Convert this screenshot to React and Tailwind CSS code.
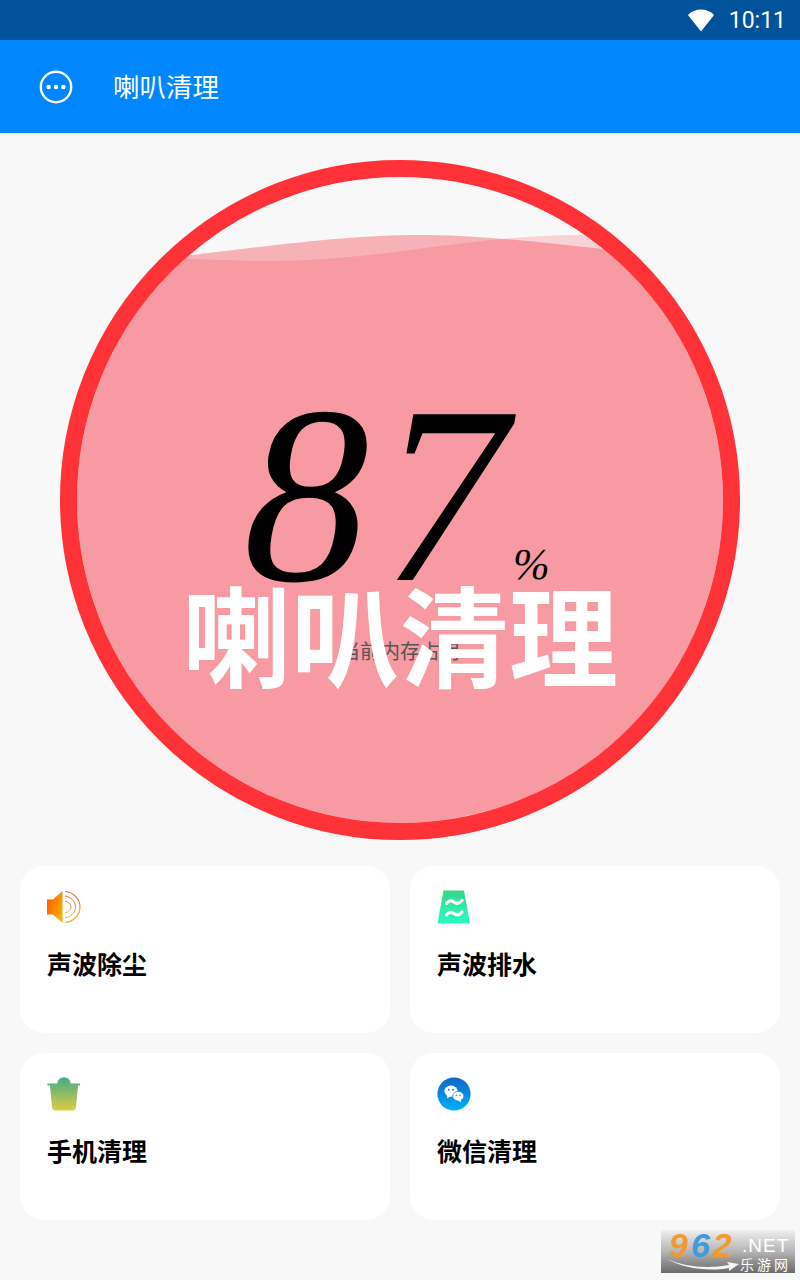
const cjk = "font-['Noto_Sans_CJK_SC',sans-serif]"

function WifiIcon() {
  return (
    <svg width="28" height="23" viewBox="0 0 30 24" preserveAspectRatio="none" className="block">
      <path d="M15 23.5 L1 6.2 C4.8 2.6 9.6 0.6 15 0.6 C20.4 0.6 25.2 2.6 29 6.2 Z" fill="#fff" />
    </svg>
  )
}

function MoreIcon() {
  return (
    <svg width="34" height="34" viewBox="0 0 34 34" className="block">
      <circle cx="17" cy="17" r="15.2" fill="none" stroke="#fff" strokeWidth="2.4" />
      <circle cx="9.6" cy="17" r="2.2" fill="#fff" />
      <circle cx="17" cy="17" r="2.2" fill="#fff" />
      <circle cx="24.4" cy="17" r="2.2" fill="#fff" />
    </svg>
  )
}

function SpeakerIcon() {
  return (
    <svg width="34" height="34" viewBox="0 0 34 34" className="block">
      <defs>
        <linearGradient id="spk" x1="0" y1="0.2" x2="1" y2="0.8">
          <stop offset="0" stopColor="#ff5a00" />
          <stop offset="1" stopColor="#ffb400" />
        </linearGradient>
        <linearGradient id="arc" x1="0" y1="0" x2="0" y2="1">
          <stop offset="0" stopColor="#ea6a3a" />
          <stop offset="1" stopColor="#f5b52e" />
        </linearGradient>
      </defs>
      <path d="M0 9.5 H6 L15.5 1 V33 L6 24.5 H0 Z" fill="url(#spk)" />
      <path d="M18 1.5 C26 2 33 8.5 33 17 C33 25.5 26 32 18 32.5" fill="none" stroke="url(#arc)" strokeWidth="1.1" />
      <path d="M18 6 C24 7 28.5 11.5 28.5 17 C28.5 22.5 24 27 18 28" fill="none" stroke="url(#arc)" strokeWidth="1" />
      <path d="M18 11 C21.5 12 24 14 24 17 C24 20 21.5 22 18 23" fill="none" stroke="url(#arc)" strokeWidth="1" />
    </svg>
  )
}

function DrainIcon() {
  return (
    <svg width="34" height="34" viewBox="0 0 34 34" className="block">
      <defs>
        <linearGradient id="drn" x1="0" y1="0" x2="0" y2="1">
          <stop offset="0" stopColor="#36d68a" />
          <stop offset="1" stopColor="#2afcc2" />
        </linearGradient>
      </defs>
      <path d="M6.5 0.5 H27 L33 33.5 H0.5 Z" fill="url(#drn)" />
      <path d="M9.5 13.5 C12 10 15 10.5 17 12 C19 13.5 22 14 25 10.5" fill="none" stroke="#fff" strokeWidth="3.2" strokeLinecap="round" />
      <path d="M9.5 25 C12 21.5 15 22 17 23.5 C19 25 22 25.5 25 22" fill="none" stroke="#fff" strokeWidth="3.2" strokeLinecap="round" />
    </svg>
  )
}

function TrashIcon() {
  return (
    <svg width="34" height="34" viewBox="0 0 34 34" className="block">
      <defs>
        <linearGradient id="trs" x1="0" y1="0" x2="0" y2="1">
          <stop offset="0" stopColor="#43ab84" />
          <stop offset="1" stopColor="#dccd42" />
        </linearGradient>
      </defs>
      <path
        d="M10.5 6.5 C10.5 2.5 13.5 0.5 17 0.5 C20.5 0.5 23.5 2.5 23.5 6.5 H33 V8.5 H31 L29 30 C28.8 32.5 27.5 33.5 25.5 33.5 H8.5 C6.5 33.5 5.2 32.5 5 30 L3 8.5 H0.5 V6.5 Z"
        fill="url(#trs)"
      />
    </svg>
  )
}

function WechatIcon() {
  return (
    <svg width="34" height="34" viewBox="0 0 34 34" className="block">
      <defs>
        <linearGradient id="wct" x1="0" y1="0" x2="0" y2="1">
          <stop offset="0" stopColor="#0f66c4" />
          <stop offset="1" stopColor="#00afff" />
        </linearGradient>
      </defs>
      <circle cx="17" cy="17" r="16.6" fill="url(#wct)" />
      <ellipse cx="14" cy="14.2" rx="6.6" ry="5.6" fill="#fff" />
      <path d="M10.5 18 L10 21.5 L14 19 Z" fill="#fff" />
      <ellipse cx="21.2" cy="19.2" rx="5.6" ry="4.8" fill="#fff" stroke="#1a8de8" strokeWidth="0.8" />
      <path d="M23.5 23 L24.5 25.5 L20.5 23.6 Z" fill="#fff" />
      <circle cx="11.8" cy="12.8" r="1" fill="#1a7fdc" />
      <circle cx="16" cy="12.8" r="1" fill="#1a7fdc" />
      <circle cx="19.4" cy="18.2" r="0.8" fill="#1a8de8" />
      <circle cx="23" cy="18.2" r="0.8" fill="#1a8de8" />
    </svg>
  )
}

function Gauge() {
  return (
    <div className="relative w-[680px] h-[680px] rounded-full border-[17px] border-[#ff3237] overflow-hidden">
      <svg className="absolute inset-0 w-full h-full" viewBox="77 177 646 646">
        <path
          d="M60 270 C230 252 330 235 417 235 C490 235 560 244 740 265 V840 H60 Z"
          fill="#f83744"
          fillOpacity="0.36"
        />
        <path
          d="M60 252 C150 257 220 261 270 261 C380 261 470 235 580 235 C640 235 690 245 740 255 V840 H60 Z"
          fill="#f83744"
          fillOpacity="0.19"
        />
      </svg>
      <div className="relative flex flex-col items-center pt-[188px]">
        <div className="flex items-end h-[260px] pr-[30px]">
          <span className="inline-block origin-bottom -skew-x-[10deg] font-['Liberation_Serif',serif] text-[253px] leading-[260px] tracking-[9px] text-black">
            87
          </span>
          <span className="inline-block origin-bottom -skew-x-[10deg] ml-[14px] font-['Liberation_Serif',serif] text-[44px] leading-none text-black mb-[38px]">
            %
          </span>
        </div>
        <p className={`${cjk} text-[20px] leading-[30px] text-[#555] mt-[11px]`}>当前内存占用</p>
      </div>
    </div>
  )
}

function FeatureCard({ icon, label }) {
  return (
    <div className="h-[167px] bg-white rounded-[24px] pl-[27px] pt-[24px]">
      {icon}
      <p className={`${cjk} mt-[21px] text-[25px] leading-[36px] font-bold text-black`}>{label}</p>
    </div>
  )
}

function SiteMark() {
  return (
    <div className="absolute right-[5px] bottom-[7px] w-[134px] h-[43px] bg-gradient-to-b from-[#efefef] via-[#b5b5b5] to-[#6a6a6a]">
      <span className="absolute left-[8px] top-[0px] font-['Liberation_Sans',sans-serif] italic font-bold text-[34px] leading-[30px] tracking-[3px]">
        <span className="text-[#f39a2e]">9</span>
        <span className="text-[#3f9bdc]">6</span>
        <span className="text-[#f39a2e]">2</span>
      </span>
      <span className="absolute left-[81px] top-[6px] font-['Liberation_Sans',sans-serif] text-[19px] leading-[20px] tracking-[1px] text-white">
        .NET
      </span>
      <span className={`absolute left-[79px] top-[25px] ${cjk} text-[14px] leading-[18px] tracking-[3px] text-white`}>
        乐游网
      </span>
      <svg className="absolute left-[6px] top-[28px]" width="72" height="14" viewBox="0 0 72 14">
        <path d="M0 1 C18 9 40 11 62 7 L60 4 L72 6 L62 13 L62 10 C40 14 16 10 0 1 Z" fill="#f4f4f4" />
      </svg>
    </div>
  )
}

export default function App() {
  return (
    <div className="relative w-[800px] h-[1280px] bg-[#f8f8f8] overflow-hidden">
      <div className="h-10 bg-[#00529c] flex items-center justify-end pr-[14px]">
        <WifiIcon />
        <span className="ml-[14px] font-['Roboto',sans-serif] text-[23px] leading-none text-white">10:11</span>
      </div>
      <div className="h-[93px] bg-[#0087ff] flex items-center pl-[39px]">
        <MoreIcon />
        <span className={`ml-[40px] ${cjk} text-[26.5px] leading-[38px] -mt-[2px] text-white`}>喇叭清理</span>
      </div>

      <div className="flex justify-center pt-[27px]">
        <div className="relative">
          <Gauge />
          <p className={`absolute left-[122px] top-[412px] ${cjk} font-bold text-[109px] leading-[120px] whitespace-nowrap text-white`}>
            喇叭清理
          </p>
        </div>
      </div>

      <div className="grid grid-cols-2 gap-5 px-5 mt-[26px]">
        <FeatureCard icon={<SpeakerIcon />} label="声波除尘" />
        <FeatureCard icon={<DrainIcon />} label="声波排水" />
        <FeatureCard icon={<TrashIcon />} label="手机清理" />
        <FeatureCard icon={<WechatIcon />} label="微信清理" />
      </div>

      <SiteMark />
    </div>
  )
}
